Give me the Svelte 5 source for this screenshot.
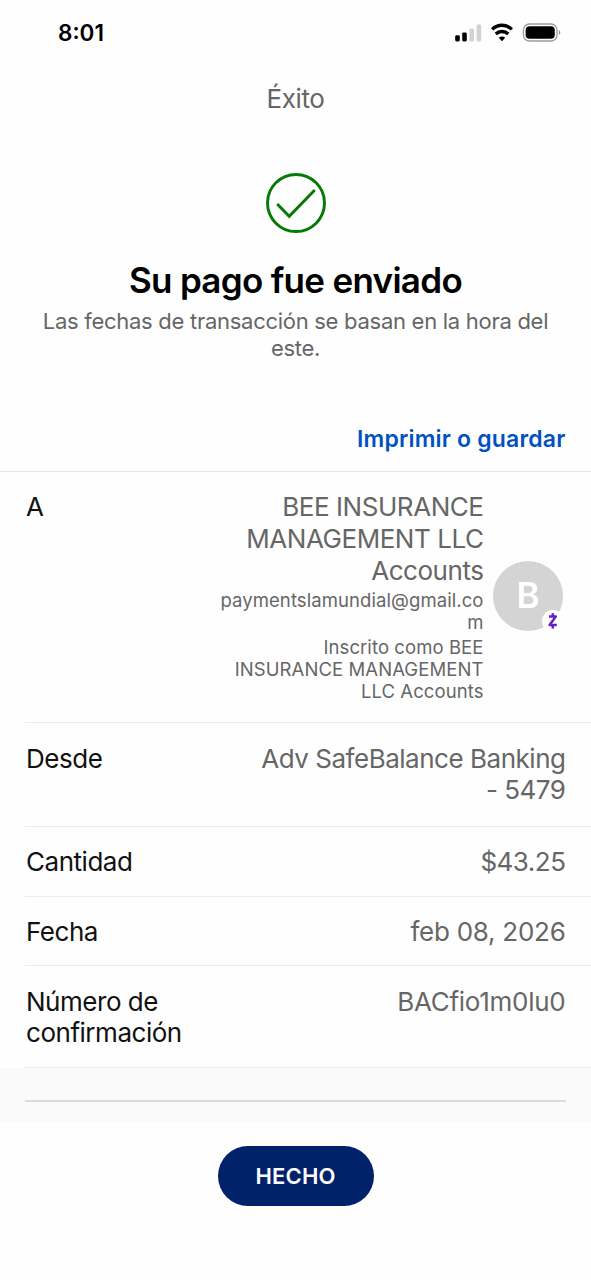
<script lang="ts">
    interface Detail {
        label: string[];
        value: string[];
        height: number;
        top: number;
        valueSpacing: number;
    }

    const recipient = {
        initial: "B",
        name: ["BEE INSURANCE", "MANAGEMENT LLC", "Accounts"],
        email: ["paymentslamundial@gmail.co", "m"],
        enrolledAs: ["Inscrito como BEE", "INSURANCE MANAGEMENT", "LLC Accounts"],
    };

    const details: Detail[] = [
        {
            label: ["Desde"],
            value: ["Adv SafeBalance Banking", "- 5479"],
            height: 104,
            top: 20,
            valueSpacing: -0.48,
        },
        {
            label: ["Cantidad"],
            value: ["$43.25"],
            height: 70,
            top: 19,
            valueSpacing: -0.5,
        },
        {
            label: ["Fecha"],
            value: ["feb 08, 2026"],
            height: 69,
            top: 19,
            valueSpacing: -0.27,
        },
        {
            label: ["Número de", "confirmación"],
            value: ["BACfio1m0lu0"],
            height: 102,
            top: 20,
            valueSpacing: -0.27,
        },
    ];
</script>

<div class="screen">
    <header class="status-bar">
        <span class="time">8:01</span>
        <svg class="status-icons" width="108" height="20" viewBox="0 0 108 20">
            <rect x="2.2" y="12.2" width="4.6" height="6.2" rx="1.4" />
            <rect x="9.2" y="9.4" width="4.6" height="9" rx="1.4" />
            <g fill="#d2d2d2">
                <rect x="16.4" y="5.6" width="4.6" height="12.8" rx="1.4" />
                <rect x="23.6" y="1.4" width="4.6" height="17" rx="1.4" />
            </g>
            <g fill="none" stroke="#000" stroke-width="3.4">
                <path d="M39.2 6.4a13.8 13.8 0 0 1 19.6 0" />
                <path d="M42.8 11a8.8 8.8 0 0 1 12.4 0" />
            </g>
            <path d="M49 18.2l-3.2-3.4a4.6 4.6 0 0 1 6.4 0z" />
            <rect
                x="70.4"
                y="1"
                width="33.6"
                height="17"
                rx="6"
                fill="none"
                stroke="#9c9c9c"
                stroke-width="1.3"
            />
            <rect x="72.6" y="3.2" width="29.2" height="12.6" rx="4" />
            <path d="M105.8 7v5c2-.7 2-4.3 0-5z" fill="#999" />
        </svg>
    </header>

    <div class="page-title">Éxito</div>

    <section class="result">
        <svg class="check" width="60" height="60" viewBox="0 0 60 60">
            <g fill="none" stroke="#047a04" stroke-width="2.9">
                <circle cx="30" cy="30" r="28.5" />
                <path d="M11.2 31l12 12.3L48.8 17" />
            </g>
        </svg>
        <h1>Su pago fue enviado</h1>
        <p>
            Las fechas de transacción se basan en la hora del<br />este.
        </p>
    </section>

    <div class="actions">
        <a href="#print">Imprimir o guardar</a>
    </div>

    <section class="details">
        <div class="row recipient">
            <span class="label">A</span>
            <div class="recipient-text">
                <div class="name">
                    {#each recipient.name as line}
                        <div>{line}</div>
                    {/each}
                </div>
                <div class="email">
                    {#each recipient.email as line}
                        <div>{line}</div>
                    {/each}
                </div>
                <div class="enrolled">
                    {#each recipient.enrolledAs as line}
                        <div>{line}</div>
                    {/each}
                </div>
            </div>
            <div class="avatar">
                <span>{recipient.initial}</span>
                <svg class="zelle" width="22" height="22" viewBox="0 0 22 22">
                    <circle cx="11" cy="11" r="11" fill="#fff" />
                    <path
                        d="M7 6.6h6.8L7.6 15h7.2M10.8 3.2v3.4M10.8 15v3.6"
                        fill="none"
                        stroke="#6420cc"
                        stroke-width="2.5"
                        stroke-linejoin="round"
                    />
                </svg>
            </div>
        </div>

        {#each details as item}
            <div
                class="row"
                style="height: {item.height}px; padding-top: {item.top}px"
            >
                <div class="label">
                    {#each item.label as line}
                        <div>{line}</div>
                    {/each}
                </div>
                <div class="value" style="letter-spacing: {item.valueSpacing}px">
                    {#each item.value as line}
                        <div>{line}</div>
                    {/each}
                </div>
            </div>
        {/each}
    </section>

    <div class="separator"><hr /></div>

    <footer>
        <button type="button">HECHO</button>
    </footer>
</div>

<style>
    :global(body) {
        margin: 0;
        background: #fff;
    }

    .screen {
        box-sizing: border-box;
        width: 591px;
        height: 1280px;
        overflow: hidden;
        background: #fefefe;
        color: #111;
        font-family: Inter, "Liberation Sans", sans-serif;
        font-size: 26px;
    }

    .status-bar {
        display: flex;
        justify-content: space-between;
        align-items: center;
        height: 66px;
        padding: 0 30px 0 58px;
        box-sizing: border-box;
    }

    .time {
        padding-bottom: 1px;
        color: #000;
        font-size: 22.5px;
        font-weight: 600;
    }

    .status-icons {
        display: block;
    }

    .page-title {
        height: 66px;
        color: #666;
        font-size: 26px;
        line-height: 66px;
        letter-spacing: -0.4px;
        text-align: center;
    }

    .result {
        display: flex;
        flex-direction: column;
        align-items: center;
        height: 273px;
        padding-top: 41px;
        box-sizing: border-box;
    }

    .check {
        display: block;
        flex: none;
    }

    h1 {
        margin: 25px 0 0;
        color: #000;
        font-size: 35px;
        font-weight: 600;
        line-height: 44px;
        letter-spacing: -0.7px;
        white-space: nowrap;
    }

    p {
        margin: 6px 0 0;
        color: #666;
        font-size: 22px;
        line-height: 26.5px;
        letter-spacing: -0.28px;
        text-align: center;
        white-space: nowrap;
    }

    .actions {
        display: flex;
        justify-content: flex-end;
        align-items: center;
        height: 66px;
        padding-right: 25.5px;
    }

    .actions a {
        padding-top: 1px;
        color: #0052c2;
        font-size: 23px;
        font-weight: 600;
        letter-spacing: 0.18px;
        text-decoration: none;
    }

    .details {
        border-top: 1px solid #e6e6e6;
    }

    .row {
        display: flex;
        justify-content: space-between;
        box-sizing: border-box;
        margin-left: 25px;
        padding: 20px 25.5px 0 1px;
        border-bottom: 1px solid #ebebeb;
        line-height: 31.4px;
        white-space: nowrap;
    }

    .label {
        letter-spacing: -0.47px;
    }

    .value {
        color: #666;
        text-align: right;
    }

    .recipient {
        height: 251px;
        padding-top: 19px;
        padding-right: 28px;
        line-height: 32px;
    }

    .recipient-text {
        margin-left: auto;
        color: #666;
        text-align: right;
    }

    .name {
        letter-spacing: -0.45px;
    }

    .email,
    .enrolled {
        margin-top: 2px;
        font-size: 18.5px;
        line-height: 22.3px;
        letter-spacing: 0.08px;
    }

    .avatar {
        position: relative;
        flex: none;
        width: 70px;
        height: 70px;
        margin: 70px 0 0 9.5px;
        border-radius: 50%;
        background: #d4d4d4;
        color: #fff;
        font-size: 35px;
        font-weight: 600;
        line-height: 69px;
        text-align: center;
    }

    .zelle {
        position: absolute;
        right: -1px;
        bottom: -1px;
    }

    .separator {
        height: 55px;
        padding: 32px 25px 0;
        box-sizing: border-box;
        background: #fafafa;
    }

    hr {
        height: 2px;
        margin: 0;
        border: 0;
        background: #dcdcdc;
    }

    footer {
        display: flex;
        justify-content: center;
        padding-top: 23px;
    }

    button {
        width: 156px;
        height: 60px;
        padding: 0;
        border: 0;
        border-radius: 30px;
        background: #012169;
        color: #fff;
        font: 600 22px Inter, "Liberation Sans", sans-serif;
        letter-spacing: 0.15px;
    }
</style>
